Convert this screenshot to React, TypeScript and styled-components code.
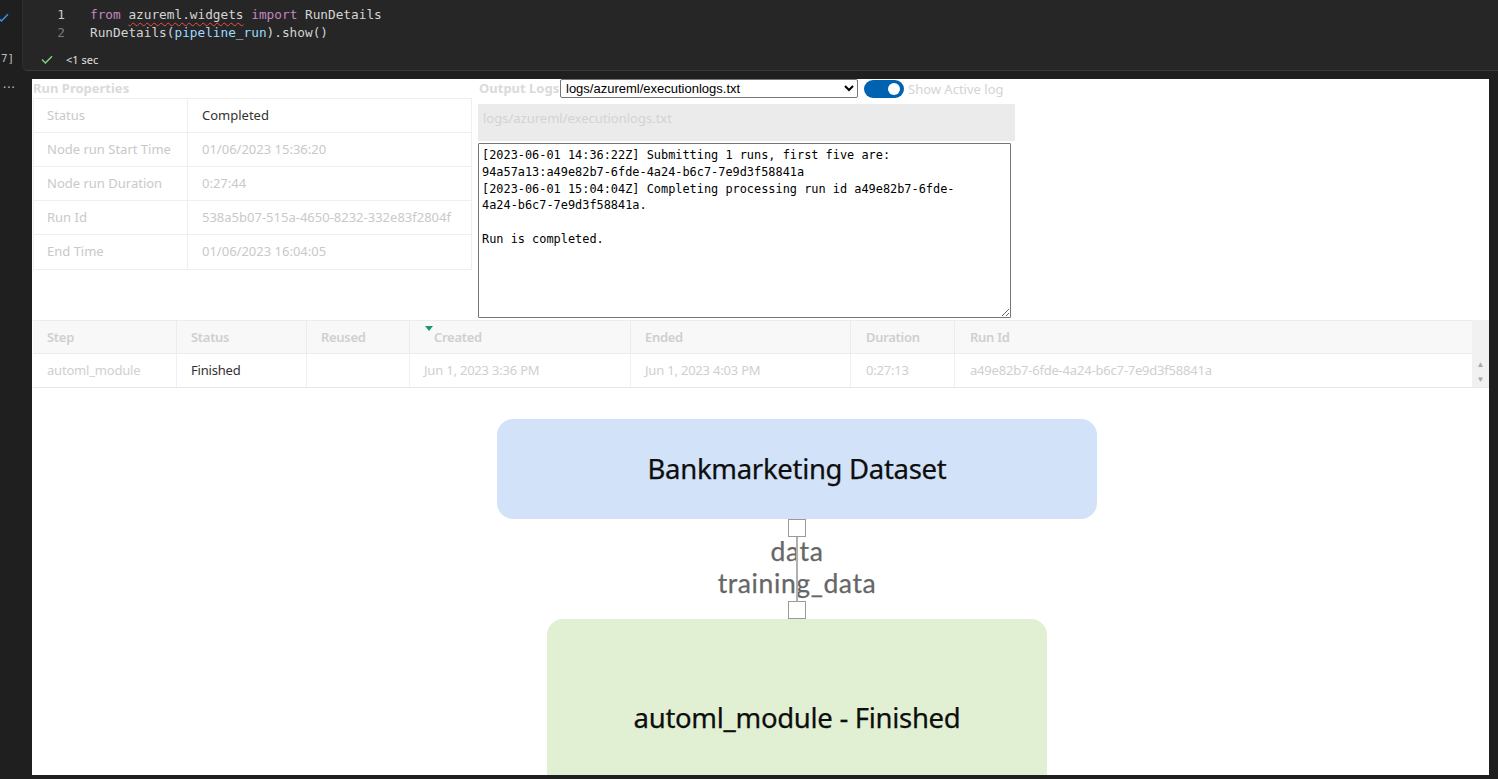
import React from "react";
import styled, { createGlobalStyle } from "styled-components";

const Global = createGlobalStyle`
  html, body { margin: 0; padding: 0; background: #1f1f1f; overflow: hidden; }
  body { width: 1498px; height: 779px; font-family: "Noto Sans", "Open Sans", sans-serif; }
  * { box-sizing: border-box; }
`;

const Page = styled.div`
  width: 1498px;
  height: 779px;
  display: flex;
  flex-direction: column;
  overflow: hidden;
`;

/* ---------- notebook cell ---------- */
const CellRow = styled.div`
  display: flex;
  height: 71px;
  flex: none;
`;

const Gutter = styled.div`
  width: 22px;
  flex: none;
  display: flex;
  flex-direction: column;
  justify-content: space-between;
  padding: 5px 0 6px 0;
`;

const ExecCount = styled.div`
  font-family: "DejaVu Sans Mono", monospace;
  font-size: 11px;
  line-height: 13px;
  color: #bdbdbd;
  padding-left: 1px;
`;

const Cell = styled.div`
  flex: 1;
  background: #262626;
  border-bottom: 1px solid #3a3a3a;
  border-left: 1px solid #2f2f2f;
  border-bottom-left-radius: 5px;
  padding-top: 6px;
`;

const CodeLine = styled.div`
  display: grid;
  grid-template-columns: 42px 1fr;
  column-gap: 25px;
  height: 18px;
  line-height: 18px;
  font-family: "DejaVu Sans Mono", "Liberation Mono", monospace;
  font-size: 12.75px;
  color: #d4d4d4;
  white-space: pre;
`;

const LineNo = styled.span<{ $active?: boolean }>`
  text-align: right;
  color: ${(p) => (p.$active ? "#cccccc" : "#7a7a7a")};
`;

const Kw = styled.span`
  color: #c586c0;
`;

const Var = styled.span`
  color: #9cdcfe;
`;

const Squiggle = styled.span`
  text-decoration: underline wavy #f14c4c;
  text-decoration-thickness: 1px;
  text-underline-offset: 3px;
`;

const StatusLine = styled.div`
  display: flex;
  align-items: center;
  gap: 13px;
  margin-top: 9px;
  padding-left: 18px;
  height: 16px;
  font-family: "Noto Sans", sans-serif;
  font-size: 11px;
  color: #e0e0e0;
`;

/* ---------- output ---------- */
const OutputRow = styled.div`
  display: flex;
  margin-top: 8px;
  height: 696px;
  flex: none;
`;

const OutGutter = styled.div`
  width: 32px;
  flex: none;
  color: #bdbdbd;
  font-size: 12px;
  line-height: 10px;
  padding: 0 0 0 3px;
  letter-spacing: 1px;
`;

const Output = styled.div`
  width: 1457px;
  flex: none;
  background: #ffffff;
  overflow: hidden;
  display: flex;
  flex-direction: column;
`;

const TopSection = styled.div`
  display: flex;
  gap: 6px;
  height: 241px;
  flex: none;
  padding-left: 1px;
  align-items: flex-start;
`;

const PropsPanel = styled.div`
  width: 439px;
  flex: none;
`;

const SectionTitle = styled.div<{ $w?: number }>`
  height: 19px;
  line-height: 19px;
  font-size: 13px;
  font-weight: 700;
  color: #dadada;
  white-space: nowrap;
  ${(p) => (p.$w ? `width: ${p.$w}px; flex: none;` : "")}
`;

const PropsTable = styled.div`
  display: grid;
  grid-template-columns: 153px 1fr;
  border: 1px solid #efefef;
`;

const PropCell = styled.div<{ $dark?: boolean; $first?: boolean }>`
  height: 34px;
  line-height: 33px;
  font-size: 13px;
  padding-left: ${(p) => (p.$first ? 13 : 14)}px;
  color: ${(p) => (p.$dark ? "#323130" : "#c9c9c9")};
  border-bottom: 1px solid #efefef;
  border-left: ${(p) => (p.$first ? "none" : "1px solid #efefef")};
  white-space: nowrap;
  &:nth-last-child(-n + 2) { border-bottom: none; }
`;

const LogsPanel = styled.div`
  width: 537px;
  flex: none;
  display: flex;
  flex-direction: column;
`;

const LogsHeader = styled.div`
  display: flex;
  align-items: center;
  height: 19px;
  padding-left: 1px;
`;

const LogSelect = styled.select`
  width: 298px;
  height: 19px;
  font-family: "Liberation Sans", Arial, sans-serif;
  font-size: 13px;
  color: #000;
  background: #fff;
  border: 1px solid #767676;
  border-radius: 2px;
  padding: 0 0 0 1px;
  flex: none;
`;

const Toggle = styled.div<{ $on?: boolean }>`
  width: 40px;
  height: 18px;
  margin-left: 6px;
  border-radius: 9px;
  background: ${(p) => (p.$on ? "#0063b1" : "#cccccc")};
  display: flex;
  align-items: center;
  justify-content: ${(p) => (p.$on ? "flex-end" : "flex-start")};
  padding: 0 4px;
  flex: none;
`;

const Knob = styled.div`
  width: 12px;
  height: 12px;
  border-radius: 50%;
  background: #ffffff;
`;

const ToggleLabel = styled.span`
  margin-left: 4px;
  font-size: 13px;
  color: #d4d4d4;
  white-space: nowrap;
`;

const PathBox = styled.div`
  margin-top: 6px;
  height: 37px;
  background: #ebebeb;
  padding: 5px 5px;
  line-height: 18px;
  font-size: 13px;
  color: #d3d3d3;
`;

const LogArea = styled.textarea`
  margin-top: 2px;
  width: 533px;
  height: 175px;
  padding: 3px 3px;
  border: 1px solid #767676;
  border-radius: 1px;
  font-family: "DejaVu Sans Mono", "Liberation Mono", monospace;
  font-size: 11.9px;
  line-height: 16.8px;
  color: #000;
  background: #fff;
  white-space: pre;
  overflow: hidden;
  resize: both;
  outline: none;
`;

/* ---------- steps table ---------- */
const StepsWrap = styled.div`
  display: flex;
  margin-left: 1px;
  flex: none;
  border-bottom: 1px solid #e6e6e6;
`;

const StepsGrid = styled.div`
  width: 1439px;
  display: grid;
  grid-template-columns: 143px 130px 103px 221px 220px 104px 518px;
`;

const HeadCell = styled.div<{ $pad?: number }>`
  position: relative;
  height: 34px;
  line-height: 33px;
  background: #f8f8f8;
  border-top: 1px solid #ececec;
  border-bottom: 1px solid #ececec;
  border-left: 1px solid #ececec;
  padding-left: ${(p) => p.$pad ?? 14}px;
  font-size: 13px;
  font-weight: 600;
  letter-spacing: -0.3px;
  color: #cfcfcf;
  white-space: nowrap;
  &:first-child { border-left: none; }
`;

const SortMark = styled.span`
  position: absolute;
  left: 15px;
  top: 5px;
  width: 0;
  height: 0;
  border-left: 4.5px solid transparent;
  border-right: 4.5px solid transparent;
  border-top: 5px solid #1a9a6c;
`;

const BodyCell = styled.div<{ $dark?: boolean; $pad?: number }>`
  height: 33px;
  line-height: 33px;
  padding-left: ${(p) => p.$pad ?? 14}px;
  font-size: 13px;
  letter-spacing: -0.2px;
  color: ${(p) => (p.$dark ? "#323130" : "#cfcfcf")};
  border-left: 1px solid #f0f0f0;
  white-space: nowrap;
  &:nth-child(7n + 1) { border-left: none; }
`;

const ScrollCol = styled.div`
  width: 17px;
  flex: none;
  background: #f1f1f1;
  display: flex;
  flex-direction: column;
  align-items: center;
  padding-top: 39px;
  gap: 5px;
  font-size: 8px;
  line-height: 10px;
  color: #a8a8a8;
`;

/* ---------- diagram ---------- */
const Diagram = styled.div`
  flex: 1;
  display: flex;
  flex-direction: column;
  align-items: center;
  padding-top: 31px;
  padding-left: 73px;
`;

const Node = styled.div<{ $bg: string; $w: number; $h: number }>`
  width: ${(p) => p.$w}px;
  height: ${(p) => p.$h}px;
  flex: none;
  background: ${(p) => p.$bg};
  border-radius: 16px;
  display: flex;
  align-items: center;
  justify-content: center;
  padding-bottom: 2px;
  font-family: "Noto Sans", "Open Sans", sans-serif;
  font-size: 27.5px;
  color: #0e0e0e;
  letter-spacing: -0.3px;
  -webkit-text-stroke: 0.25px #0e0e0e;
`;

const Port = styled.div`
  width: 18px;
  height: 18px;
  flex: none;
  border: 1.5px solid #9a9a9a;
  background: #ffffff;
`;

const Connector = styled.div`
  position: relative;
  height: 64px;
  flex: none;
  display: flex;
  flex-direction: column;
  align-items: center;
  &::after {
    content: "";
    position: absolute;
    left: 50%;
    top: 0;
    bottom: 0;
    width: 1.5px;
    margin-left: -0.75px;
    background: #b0b0b0;
  }
`;

const EdgeLabel = styled.div`
  height: 32px;
  line-height: 28px;
  font-family: Lato, "Noto Sans", sans-serif;
  font-size: 26.5px;
  letter-spacing: 0.6px;
  color: #666666;
  white-space: nowrap;
  -webkit-text-stroke: 0.25px #666666;
`;

const Tick = ({ color, w = 12 }: { color: string; w?: number }) => (
  <svg width={w} height={9} viewBox="0 0 12 9" fill="none">
    <path d="M1 4.6 L4.4 8 L11 1.2" stroke={color} strokeWidth="1.4" />
  </svg>
);

const props: [string, string, boolean][] = [
  ["Status", "Completed", true],
  ["Node run Start Time", "01/06/2023 15:36:20", false],
  ["Node run Duration", "0:27:44", false],
  ["Run Id", "538a5b07-515a-4650-8232-332e83f2804f", false],
  ["End Time", "01/06/2023 16:04:05", false],
];

const logText =
  "[2023-06-01 14:36:22Z] Submitting 1 runs, first five are:\n" +
  "94a57a13:a49e82b7-6fde-4a24-b6c7-7e9d3f58841a\n" +
  "[2023-06-01 15:04:04Z] Completing processing run id a49e82b7-6fde-\n" +
  "4a24-b6c7-7e9d3f58841a.\n" +
  "\n" +
  "Run is completed.";

const headers = ["Step", "Status", "Reused", "Created", "Ended", "Duration", "Run Id"];
const row = [
  "automl_module",
  "Finished",
  "",
  "Jun 1, 2023 3:36 PM",
  "Jun 1, 2023 4:03 PM",
  "0:27:13",
  "a49e82b7-6fde-4a24-b6c7-7e9d3f58841a",
];

export default function App() {
  return (
    <Page>
      <Global />
      <CellRow>
        <Gutter>
          <div style={{ marginLeft: -3 }}>
            <Tick color="#3794ff" />
          </div>
          <ExecCount>7]</ExecCount>
        </Gutter>
        <Cell>
          <CodeLine>
            <LineNo $active>1</LineNo>
            <span>
              <Kw>from</Kw> <Squiggle>azureml.widgets</Squiggle> <Kw>import</Kw> RunDetails
            </span>
          </CodeLine>
          <CodeLine>
            <LineNo>2</LineNo>
            <span>
              RunDetails(<Var>pipeline_run</Var>).show()
            </span>
          </CodeLine>
          <StatusLine>
            <Tick color="#89d185" />
            <span>&lt;1 sec</span>
          </StatusLine>
        </Cell>
      </CellRow>

      <OutputRow>
        <OutGutter>...</OutGutter>
        <Output>
          <TopSection>
            <PropsPanel>
              <SectionTitle>Run Properties</SectionTitle>
              <PropsTable>
                {props.map(([k, v, dark]) => (
                  <React.Fragment key={k}>
                    <PropCell $first>{k}</PropCell>
                    <PropCell $dark={dark}>{v}</PropCell>
                  </React.Fragment>
                ))}
              </PropsTable>
            </PropsPanel>
            <LogsPanel>
              <LogsHeader>
                <SectionTitle $w={81}>Output Logs</SectionTitle>
                <LogSelect defaultValue="logs/azureml/executionlogs.txt">
                  <option>logs/azureml/executionlogs.txt</option>
                </LogSelect>
                <Toggle $on>
                  <Knob />
                </Toggle>
                <ToggleLabel>Show Active log</ToggleLabel>
              </LogsHeader>
              <PathBox>logs/azureml/executionlogs.txt</PathBox>
              <LogArea readOnly wrap="off" value={logText} />
            </LogsPanel>
          </TopSection>

          <StepsWrap>
            <StepsGrid>
              {headers.map((h) => (
                <HeadCell key={h} $pad={h === "Created" ? 24 : h === "Duration" || h === "Run Id" ? 15 : 14}>
                  {h === "Created" && <SortMark />}
                  {h}
                </HeadCell>
              ))}
              {row.map((c, i) => (
                <BodyCell key={i} $dark={i === 1} $pad={i === 5 || i === 6 ? 15 : 14}>
                  {c}
                </BodyCell>
              ))}
            </StepsGrid>
            <ScrollCol>
              <span>▲</span>
              <span>▼</span>
            </ScrollCol>
          </StepsWrap>

          <Diagram>
            <Node $bg="#d2e2f8" $w={600} $h={100}>
              Bankmarketing Dataset
            </Node>
            <Port />
            <Connector>
              <EdgeLabel>data</EdgeLabel>
              <EdgeLabel>training_data</EdgeLabel>
            </Connector>
            <Port />
            <Node $bg="#e1f0d3" $w={500} $h={198}>
              automl_module - Finished
            </Node>
          </Diagram>
        </Output>
      </OutputRow>
    </Page>
  );
}
